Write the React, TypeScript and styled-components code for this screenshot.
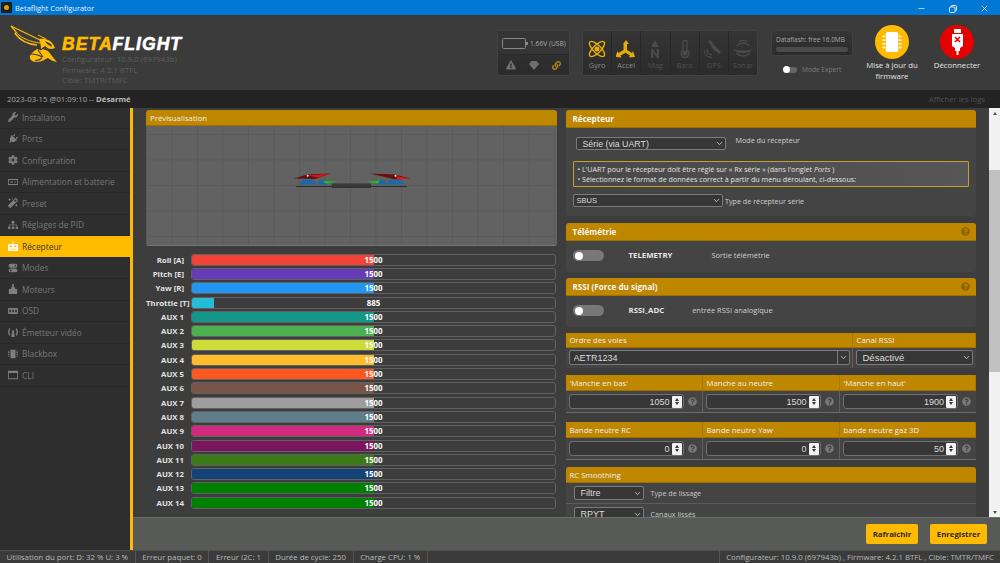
import React from 'react';
import styled, { createGlobalStyle } from 'styled-components';
import { FaWrench, FaPlug, FaCog, FaMagic, FaSitemap, FaExclamationTriangle, FaLink, FaMicrochip, FaQuestionCircle } from 'react-icons/fa';
import { ChevronDown, Minus, X } from 'lucide-react';

const Global = createGlobalStyle`
  html, body { margin: 0; padding: 0; background: #3c3d3c; }
  * { box-sizing: border-box; }
  body { font-family: "Open Sans", "Liberation Sans", sans-serif; }
`;

const Page = styled.div`
  width: 1000px; height: 563px; overflow: hidden;
  display: flex; flex-direction: column; color: #d8d8d8;
`;

/* title bar */
const TitleBar = styled.div`
  height: 15px; flex: none; background: #0078d4; color: #e8f2fb;
  display: flex; align-items: center; font-size: 7.45px; padding-left: 1px;
`;
const AppIcon = styled.span`
  width: 11px; height: 11px; background: #1c1c1c; border-radius: 1px; margin-right: 3px;
  display: flex; align-items: center; justify-content: center;
`;
const AppDot = styled.span`width: 5px; height: 5px; background: #d8a400; border-radius: 50%;`;
const WindowControls = styled.div`
  margin-left: auto; display: flex; align-items: center; color: #dceaf6; padding-right: 11px; gap: 23px; margin-top: 2px;
`;

/* header */
const Header = styled.header`
  height: 75px; flex: none; background: #3a3b3a; display: flex; align-items: flex-start;
`;
const Brand = styled.div`
  display: flex; width: 497px; padding: 10px 0 0 10px; flex: none;
`;
const BrandText = styled.div`display: flex; flex-direction: column; margin: 12px 0 0 4px;`;
const Wordmark = styled.div`
  font: italic 700 17.6px/14px "Liberation Sans", sans-serif; letter-spacing: 1px; color: #fff;
  -webkit-text-stroke: 0.6px currentColor;
`;
const WordAccent = styled.span`color: #ffbb00;`;
const Versions = styled.div`
  font-size: 7.8px; line-height: 10.7px; color: #5d5e5d; margin-top: 3px; white-space: nowrap;
`;
const DarkPanel = styled.div`
  background: linear-gradient(#343534, #2a2b2a); border-radius: 3px; border: 1px solid #404140;
`;
const PowerPanel = styled(DarkPanel)`
  width: 73px; height: 46px; margin-top: 15px; flex: none; display: flex; flex-direction: column;
`;
const PowerTop = styled.div`
  height: 24px; display: flex; align-items: center; padding: 2px 0 0 4px; gap: 4px; font-size: 6.7px; color: #a8a8a8; white-space: nowrap;
  border-bottom: 1px solid #282928; background: #343534;
`;
const BatteryShell = styled.span`
  width: 24px; height: 11px; border: 1px solid #8a8a8a; border-radius: 1.5px; position: relative; flex: none;
  &::after { content: ''; position: absolute; right: -3px; top: 3px; width: 2px; height: 3px; background: #8a8a8a; }
`;
const PowerBottom = styled.div`
  flex: 1; display: flex; align-items: center; justify-content: space-around; padding: 0 2px;
`;
const SensorPanel = styled(DarkPanel)`
  margin: 15px 0 0 12px; height: 46px; flex: none; display: flex; width: 176px;
`;
const SensorCell = styled.div<{ $on?: boolean }>`
  flex: 1; display: flex; flex-direction: column; align-items: center; padding-top: 9px;
  border-left: 1px solid #262726; &:first-child { border-left: 0; }
  color: ${p => (p.$on ? '#e8ac08' : '#4a4b4a')};
  svg { height: 18px; width: 20px; flex: none; }
`;
const SensorLabel = styled.span<{ $on?: boolean }>`
  font-size: 7.4px; color: ${p => (p.$on ? '#8a8b8a' : '#505150')}; margin-top: 2px; line-height: 10px;
`;
const FlashColumn = styled.div`
  width: 82px; margin: 15px 0 0 13px; flex: none; display: flex; flex-direction: column;
`;
const FlashBox = styled(DarkPanel)`
  height: 26px; padding: 3px 4px; font-size: 6.5px; color: #a8a8a8; white-space: nowrap; line-height: 11px;
`;
const FlashBar = styled.div`height: 5px; border-radius: 2px; background: #4a4b4a; margin-top: 2px;`;
const ExpertRow = styled.div`
  display: flex; align-items: center; gap: 5px; font-size: 6.6px; color: #7c7d7c; margin: 9px 0 0 13px; white-space: nowrap;
`;
const MiniSwitch = styled.span`
  width: 13px; height: 6px; border-radius: 3px; background: #666; position: relative; flex: none;
  &::before { content: ''; position: absolute; left: -1px; top: -.5px; width: 7px; height: 7px; border-radius: 50%; background: #fff; }
`;
const ActionGroup = styled.div`display: flex; margin-left: 6.5px; flex: none;`;
const Action = styled.div`
  width: 65px; display: flex; flex-direction: column; align-items: center; text-align: center; padding-top: 9.5px;
  font-size: 7.8px; line-height: 10.7px; color: #e4e4e4;
`;
const ActionCircle = styled.div<{ $color: string }>`
  width: 34px; height: 34px; border-radius: 50%; background: ${p => p.$color}; color: #fff;
  display: flex; align-items: center; justify-content: center; margin-bottom: 1.500px;
`;

/* log bar */
const LogBar = styled.div`
  height: 18px; flex: none; background: #222322; display: flex; align-items: center; justify-content: space-between;
  padding: 0 15px 0 7px; font-size: 7.75px; color: #a9a9a9;
`;
const LogState = styled.b`color: #bdbdbd; font-weight: 700;`;
const LogLink = styled.span`color: #515251; font-size: 7.7px;`;

/* main */
const Main = styled.div`flex: 1; display: flex; min-height: 0;`;
const Sidebar = styled.nav`width: 130px; flex: none; background: #2d2e2d; overflow: hidden;`;
const NavList = styled.div`margin-top: -1px;`;
const NavItem = styled.div<{ $active?: boolean }>`
  height: 21.5px; display: flex; align-items: center; padding-left: 8px; gap: 4px;
  font-size: 8.4px; white-space: nowrap;
  background: ${p => (p.$active ? '#ffbb00' : '#2d2e2d')};
  color: ${p => (p.$active ? '#3a3a3a' : '#787978')};
  border-bottom: 1px solid #262726;
  svg { flex: none; width: 10px; height: 10px; color: ${p => (p.$active ? '#fff' : '#7d7e7d')}; }
`;
const PortsIcon = styled(FaPlug)`transform: rotate(45deg);`;
const Tab = styled.section`
  flex: 1; min-width: 0; border-left: 3px solid #ffbb00; display: flex; flex-direction: column;
`;
const ScrollArea = styled.div`flex: 1; min-height: 0; display: flex; background: #3c3d3c; overflow: hidden;`;
const Columns = styled.div`
  flex: 1; min-width: 0; padding: 2px 13px 0 13px; display: grid; grid-template-columns: 411px 410.5px; column-gap: 8.5px; align-items: start; overflow: hidden;
`;
const Column = styled.div`display: flex; flex-direction: column;`;

const Scrollbar = styled.div`
  width: 11px; flex: none; background: #f1f1f1; display: flex; flex-direction: column; align-items: center; position: relative;
`;
const ScrollArrow = styled.div<{ $down?: boolean }>`
  height: 11px; flex: none; display: flex; align-items: center; justify-content: center;
  &::before { content: ''; border: 2.5px solid transparent; ${p => (p.$down ? 'border-top: 3px solid #505050; margin-top: 3px;' : 'border-bottom: 3px solid #505050; margin-bottom: 3px;')} }
`;
const ScrollTrack = styled.div`flex: 1; width: 100%; padding-top: 51px;`;
const ScrollThumb = styled.div`height: 202px; background: #c1c1c1; width: 100%;`;

/* panels */
const Heading = styled.div<{ $h?: number }>`
  height: ${p => p.$h ?? 18}px; background: #bf8600; color: #f4f4f4; display: flex; align-items: center; justify-content: space-between;
  padding: 0 6px 0 7px; font-size: 8.1px; font-weight: 700; border-radius: 3px 3px 0 0; border-bottom: 1px solid #9d7000; flex: none;
`;
const PlainHeading = styled(Heading)`font-weight: 400; font-size: 7.8px; padding-left: 4px; color: #f0f0f0;`;
const PreviewPanel = styled.div`
  height: 136px; background: #5f5f5f; border-radius: 3px; display: flex; flex-direction: column; overflow: hidden; border-bottom: 1px solid #777;
`;
const PreviewCanvas = styled.div`
  flex: 1; display: flex; align-items: center; justify-content: center; padding: 0 3px 12px 0;
  background-color: #626262;
  background-image:
    linear-gradient(#5b5b5b 1px, transparent 1px), linear-gradient(90deg, #5b5b5b 1px, transparent 1px);
  background-size: 25.500px 25.500px;
  background-position: 0 8px, 0 0;
`;
const Bars = styled.div`margin-top: 6.5px; display: flex; flex-direction: column;`;
const BarRow = styled.div`
  height: 14.3px; display: grid; grid-template-columns: 38px 365px; column-gap: 7px; align-items: center; justify-content: start;
`;
const BarLabel = styled.span`
  font-size: 7.8px; font-weight: 700; color: #e2e2e2; text-align: right; white-space: nowrap;
`;
const BarTrack = styled.div`
  height: 12px; border: 1px solid #606160; border-radius: 3px; position: relative; overflow: hidden;
`;
const BarFill = styled.div<{ $c: string }>`height: 100%; background: ${p => p.$c};`;
const BarValue = styled.span`
  position: absolute; left: 0; right: 0; top: 0; bottom: 0; text-align: center; line-height: 10px; font-size: 7.9px; font-weight: 700; color: #fff;
`;

const Panel = styled.div<{ $mt?: number }>`
  background: #434443; border-radius: 3px; margin-top: ${p => p.$mt ?? 0}px; display: flex; flex-direction: column;
`;
const Help = styled(FaQuestionCircle)<{ $dim?: boolean }>`
  width: 9px; height: 9px; flex: none; color: ${p => (p.$dim ? '#787978' : '#8d6500')};
`;
const SelectWrap = styled.div<{ $w: number; $h?: number; $ml?: number }>`
  position: relative; width: ${p => p.$w}px; height: ${p => p.$h ?? 14}px; margin-left: ${p => p.$ml ?? 0}px; flex: none;
`;
const NativeSelect = styled.select<{ $fs?: number; $pl?: number }>`
  appearance: none; width: 100%; height: 100%; background: #363736; border: 1px solid #7a7b7a; border-radius: 2px; color: #dcdcdc;
  font: ${p => p.$fs ?? 9}px "Liberation Sans", sans-serif; padding: 0 0 0 ${p => p.$pl ?? 6}px; outline: none; display: block;
`;
const Chevron = styled(ChevronDown)`
  position: absolute; right: 2px; top: 50%; margin-top: -4.5px; width: 9px; height: 9px; color: #e0e0e0; pointer-events: none;
`;
const ChevronDivider = styled.span`
  position: absolute; right: 12px; top: 1px; bottom: 1px; width: 1px; background: #7a7b7a; pointer-events: none;
`;
const ReceiverBody = styled.div`padding: 9px 7px 9px; display: flex; flex-direction: column;`;
const SelectRow = styled.div`display: flex; align-items: flex-start; font-size: 7.2px; color: #d0d0d0;`;
const ModeLabel = styled.span`margin: -2px 0 0 10px; line-height: 10px;`;
const TypeLabel = styled.span`margin: 2px 0 0 2.5px; line-height: 10px;`;
const Note = styled.div`
  margin: 11px 0 7px; height: 26px; border: 1px solid #c5a02b; border-radius: 1px; background: linear-gradient(90deg, #464746, #555655);
  font-size: 7.17px; line-height: 9.5px; padding: 3px 4px; color: #e2e2e2; white-space: nowrap;
`;
const ToggleBody = styled.div<{ $gap: number }>`
  height: 31px; display: flex; align-items: center; padding: 0 0 2px 7px; font-size: 7.5px; color: #cfcfcf;
  span:last-child { margin-left: ${p => p.$gap}px; margin-top: -2px; }
`;
const Switch = styled.span`
  width: 31px; height: 11px; border-radius: 6px; background: #777877; position: relative; flex: none; margin-right: 25px;
  &::before { content: ''; position: absolute; left: 2px; top: 1.5px; width: 8px; height: 8px; border-radius: 50%; background: #fff; }
`;
const FeatureName = styled.span`font-weight: 700; font-size: 7.8px; color: #e6e6e6; white-space: nowrap; margin-top: -1px;`;
const FeatureDesc = styled.span`white-space: nowrap;`;
const SplitHeads = styled.div`display: grid; grid-template-columns: 287px 123.5px;`;
const SplitCell = styled.div`
  border-right: 1px solid #5f605f; padding: 3px; &:last-child { border-right: 0; }
`;
const ChannelCell = styled(SplitCell)`height: 20px; padding: 2px 3px 0;`;
const HeadPad = styled(PlainHeading)`border-radius: 0; border-right: 1px solid #aa7800; &:last-child { border-right: 0; }`;
const TripleGrid = styled.div`display: grid; grid-template-columns: 137px 137px 136.5px;`;
const NumCell = styled.div`
  height: 21px; display: flex; align-items: center; padding: 0 5px 0 3px; border-right: 1px solid #5f605f; gap: 4px;
  &:last-child { border-right: 0; }
`;
const NumInput = styled.div`
  flex: 1; height: 15px; border: 1px solid #6f706f; border-radius: 3px; background: #363736; display: flex; align-items: center; justify-content: flex-end;
  font: 9px "Liberation Sans", sans-serif; color: #dcdcdc; padding-right: 1px; gap: 2px;
`;
const Spin = styled.span`
  width: 10px; height: 12px; background: #f2f2f2; border-radius: 1px; display: flex; flex-direction: column; align-items: center; justify-content: center; gap: 1.5px;
  &::before { content: ''; border: 2.2px solid transparent; border-top: 0; border-bottom: 3px solid #333; }
  &::after { content: ''; border: 2.2px solid transparent; border-bottom: 0; border-top: 3px solid #333; }
`;
const NumPanel = styled(Panel)`border-bottom: 1px solid #6a6b6a; border-radius: 3px 3px 0 0;`;
const SmoothRow = styled.div`
  height: 21px; display: flex; align-items: center; padding-left: 8px; gap: 7px; font-size: 7.2px; color: #c8c8c8; border-bottom: 1px solid #5a5b5a;
`;

/* bottom */
const Toolbar = styled.div`
  height: 33px; flex: none; background: #585a58; border-top: 1px solid #6c6d6c; display: flex; align-items: flex-start; justify-content: flex-end; gap: 12px; padding: 6px 13px 0 0; margin-right: 0;
`;
const ToolButton = styled.button<{ $w: number }>`
  width: ${p => p.$w}px; height: 20px; background: #ffbb00; border: 0; border-radius: 2px; padding: 0;
  font: 700 7.8px "Open Sans", sans-serif; color: #2a2a2a;
`;
const StatusBar = styled.footer`
  height: 13px; flex: none; background: #3a3b3a; border-top: 1px solid #505150; display: flex; font-size: 7.8px; color: #b9b9b9; white-space: nowrap;
`;
const StatusItem = styled.span`
  padding: 0 6.6px; line-height: 12px; border-right: 1px solid #555655;
  &:first-child { padding-left: 6.5px; }
`;
const StatusRight = styled.span`
  margin-left: auto; padding: 0 6px; line-height: 12px; border-left: 1px solid #555655;
`;

/* drawings */
const WaspLogo = () => (
  <svg width="48" height="38" viewBox="0 0 48 38" fill="none">
    <path d="M1 1L32 16" stroke="#ffbb00" strokeWidth="1.3" />
    <path d="M1 1L6.500 7.500 5 8.500C9 14 16 19 27 20" stroke="#ffbb00" strokeWidth="1.300" />
    <path d="M7 8.500C12 13 20 17 30 18" stroke="#ffbb00" strokeWidth="1" />
    <path d="M28 10L36 14" stroke="#ffbb00" strokeWidth="1" />
    <path d="M29 14C36 13 42 15 45 23 41 25 38 24 35 21L31 24C31 20 30 17 29 14z" fill="#ffbb00" />
    <path d="M35 16L41 19 42 22 37 19z" fill="#3a3b3a" />
    <path d="M27 24C24 26 21 28 20 31 19 35 23 37 27 37 32 37 35 34 38 33 40 35 43 36 47 37 43 33 41 29 38 26L33 24C31 26 29 25 27 24z" fill="#ffbb00" />
    <path d="M21 29C25 29 29 30 32 32M25 36C28 35 30 35 32 33M28 25L33 32" stroke="#3a3b3a" strokeWidth="1.100" />
  </svg>
);
const Gyro = () => (
  <svg viewBox="0 0 20 18" fill="none" stroke="currentColor" strokeWidth="1.4">
    <ellipse cx="10" cy="9" rx="10" ry="3.8" transform="rotate(45 10 9)" />
    <ellipse cx="10" cy="9" rx="10" ry="3.8" transform="rotate(-45 10 9)" />
    <circle cx="10" cy="9" r="1.8" fill="currentColor" />
  </svg>
);
const Accel = () => (
  <svg viewBox="0 0 20 18" fill="currentColor">
    <path d="M10 0l3 4h-2v6l5 3 1-2 2 6-6 .5 1-2-4.500-2.700-5 2.700 1 2-6-.5 2-6 1 2 5-3V4H7z" />
  </svg>
);
const Mag = () => (
  <svg viewBox="0 0 20 18" fill="currentColor">
    <path d="M10 0l4 7H6z" />
    <path d="M6 18V9h1.800l4 5.500V9H14v9h-1.800l-4-5.500V18z" />
  </svg>
);
const Baro = () => (
  <svg viewBox="0 0 20 18" fill="none" stroke="currentColor" strokeWidth="1.4">
    <path d="M8 10V2a2 2 0 0 1 4 0v8a4 4 0 1 1-4 0z" />
    <circle cx="10" cy="13" r="1.800" fill="currentColor" />
  </svg>
);
const Satellite = () => (
  <svg viewBox="0 0 20 18" fill="currentColor" stroke="none">
    <path d="M6 0l4 4-2 2-4-4zM13 8l4 4-2 2-4-4z" />
    <path d="M9.500 4.500l4 4-2.500 2.500-4-4z" />
    <path d="M3.500 9.500C3.500 12 5.500 14 8 14v1.300C4.800 15.300 2.200 12.700 2.200 9.500zM.5 9.500C.5 13.700 3.800 17 8 17v1C3.200 18-.5 14.300-.5 9.500z" />
  </svg>
);
const Sonar = () => (
  <svg viewBox="0 0 20 18" fill="none" stroke="currentColor" strokeWidth="1.300">
    <path d="M8.500 2.500a2.500 2.500 0 0 1 3 0M6 1a6 6 0 0 1 8 0" transform="translate(0 1)" />
    <path d="M3.500 7a9 9 0 0 1 13 0" transform="translate(0 -1)" />
    <path d="M0 9c3 3 5 4 10 4s7-1 10-4c-3 1-6 1.500-10 1.500S3 10 0 9z" fill="currentColor" stroke="none" />
    <path d="M3 13c4 4 10 4 14 0" />
  </svg>
);
const Diamond = () => (
  <svg width="10" height="10" viewBox="0 0 10 10" fill="#6f706f">
    <path d="M2.500 1h5L10 4 5 10 0 4z" />
  </svg>
);
const UsbIcon = () => (
  <svg width="15" height="26" viewBox="0 0 15 26" fill="#fff">
    <path d="M4 0h7v4H4z" />
    <path d="M2 5h11v12l-3 2v3H8.500v4h-2v-4H5v-3l-3-2z" />
    <path d="M5 8l5 5M10 8l-5 5" stroke="#e60000" strokeWidth="1.600" />
  </svg>
);
const Restore = () => (
  <svg width="8" height="8" viewBox="0 0 8 8" fill="none" stroke="currentColor" strokeWidth="1">
    <rect x=".5" y="2" width="5.500" height="5.500" rx="1" />
    <path d="M2 2V1.500a1 1 0 0 1 1-1h3.500a1 1 0 0 1 1 1V5a1 1 0 0 1-1 1" />
  </svg>
);
const QuadModel = () => (
  <svg width="160" height="40" viewBox="0 0 160 40">
    <path d="M26 26.500H62M101 26.500H137" stroke="#2c2c2c" strokeWidth="1" />
    <path d="M62 23.500h39V28H62z" fill="#333" />
    <path d="M63 25h37" stroke="#555" strokeWidth=".6" />
    <path d="M24 18.500L37 14.500 60 13.500 45 19z" fill="#6a0f0f" />
    <path d="M38 15.500L60 13.500 48 17.500z" fill="#d01818" />
    <path d="M29 24.500L33 19.500H43L47 24.500z" fill="#1a6aa8" />
    <path d="M47 24.500L50 20H54L57 24.500z" fill="#1a6aa8" />
    <path d="M53 21L68 21.800 56 23.500z" fill="#20c020" />
    <circle cx="37.700" cy="15.700" r="1" fill="#e6e6e6" />
    <path d="M100 13.500L125 14.500 140 18.500 125 19.500z" fill="#6a0f0f" />
    <path d="M125 16L140 18.500 128 19.500z" fill="#e01818" />
    <path d="M116 24.500L120 19.500H130L135 24.500z" fill="#1a6aa8" />
    <path d="M106 24.500L109 20H114L117 24.500z" fill="#1a6aa8" />
    <path d="M96 21.800L110 20.500 108 23.500z" fill="#20c020" />
    <circle cx="125.500" cy="15.700" r="1" fill="#e6e6e6" />
  </svg>
);
const icon = (children: React.ReactNode) => (
  <svg viewBox="0 0 12 12" fill="currentColor" stroke="none">{children}</svg>
);
const BatteryNav = () => icon(<path fillRule="evenodd" d="M0 2.500h12v7H0zM1 3.500v5h10v-5zM3 5.500h3v1H3zM8 5h1v2H8z" />);
const ReceiverNav = () => icon(<path fillRule="evenodd" d="M5.500 0h1v3.500H11a1 1 0 0 1 1 1V11a1 1 0 0 1-1 1H1a1 1 0 0 1-1-1V4.500a1 1 0 0 1 1-1h4.500zM2 5.500v2h2.500v-2zM7.500 5.500v2H10v-2zM3 9.300v1h6v-1z" />);
const ModesNav = () => icon(<path fillRule="evenodd" d="M3 1h6a2.300 2.300 0 0 1 0 4.600H3A2.300 2.300 0 0 1 3 1zM8.800 2.300a1 1 0 1 0 0 2 1 1 0 0 0 0-2zM3 6.600h6a2.300 2.300 0 0 1 0 4.600H3a2.300 2.300 0 0 1 0-4.600zM3.200 7.900a1 1 0 1 0 0 2 1 1 0 0 0 0-2z" />);
const MotorNav = () => icon(<path d="M5 0h2v4h1.500v2H11v6H1V6h2.500V4H5z" />);
const OsdNav = () => icon(<path fillRule="evenodd" d="M1 2.500h10a1 1 0 0 1 1 1v5a1 1 0 0 1-1 1H1a1 1 0 0 1-1-1v-5a1 1 0 0 1 1-1zM1.500 4.500v3h2v-3zM5 4.500v3h2v-3zM8.500 4.500v3h2v-3z" />);
const VtxNav = () => icon(<path d="M5 4h2l1 8H4zM3 2.500L1.800 1.500C-.5 4-.5 8 1.800 10.500L3 9.500C1.300 7.500 1.300 4.500 3 2.500zM9 2.500l1.200-1c2.300 2.500 2.300 6.500 0 9L9 9.500c1.700-2 1.700-5 0-7z" />);
const BlackboxNav = () => icon(<path d="M3 1h6v10H3zM0 2h2v1H0zM0 4h2v1H0zM0 6h2v1H0zM0 8h2v1H0zM10 2h2v1h-2zM10 4h2v1h-2zM10 6h2v1h-2zM10 8h2v1h-2z" />);
const CliNav = () => icon(<path fillRule="evenodd" d="M0 1h12v10H0zM1 3.500V10h10V3.500z" />);

const navItems: [string, React.ReactNode][] = [
  ['Installation', <FaWrench />],
  ['Ports', <PortsIcon />],
  ['Configuration', <FaCog />],
  ['Alimentation et batterie', <BatteryNav />],
  ['Preset', <FaMagic />],
  ['Réglages de PID', <FaSitemap />],
  ['Récepteur', <ReceiverNav />],
  ['Modes', <ModesNav />],
  ['Moteurs', <MotorNav />],
  ['OSD', <OsdNav />],
  ['Émetteur vidéo', <VtxNav />],
  ['Blackbox', <BlackboxNav />],
  ['CLI', <CliNav />],
];

const channels: [string, number, string][] = [
  ['Roll [A]', 1500, '#f44336'],
  ['Pitch [E]', 1500, '#673ab7'],
  ['Yaw [R]', 1500, '#2196f3'],
  ['Throttle [T]', 885, '#26bcd7'],
  ['AUX 1', 1500, '#149688'],
  ['AUX 2', 1500, '#4caf50'],
  ['AUX 3', 1500, '#cddc39'],
  ['AUX 4', 1500, '#ffbc2c'],
  ['AUX 5', 1500, '#ff5722'],
  ['AUX 6', 1500, '#795548'],
  ['AUX 7', 1500, '#9e9e9e'],
  ['AUX 8', 1500, '#607d8b'],
  ['AUX 9', 1500, '#d12b80'],
  ['AUX 10', 1500, '#7b1560'],
  ['AUX 11', 1500, '#3b7a17'],
  ['AUX 12', 1500, '#134279'],
  ['AUX 13', 1500, '#008000'],
  ['AUX 14', 1500, '#008000'],
];

const Select = ({ w, h, ml, value, fs, pl, boxed }: { w: number; h?: number; ml?: number; value: string; fs?: number; pl?: number; boxed?: boolean }) => (
  <SelectWrap $w={w} $h={h} $ml={ml}>
    <NativeSelect $fs={fs} $pl={pl} defaultValue={value}>
      <option>{value}</option>
    </NativeSelect>
    {boxed && <ChevronDivider />}
    <Chevron strokeWidth={2} />
  </SelectWrap>
);

const NumField = ({ value }: { value: number }) => (
  <NumCell>
    <NumInput>{value}<Spin /></NumInput>
    <Help $dim />
  </NumCell>
);

export default function App() {
  return (
    <Page>
      <Global />
      <TitleBar>
        <AppIcon><AppDot /></AppIcon>
        Betaflight Configurator
        <WindowControls>
          <Minus size={9} />
          <Restore />
          <X size={9} />
        </WindowControls>
      </TitleBar>
      <Header>
        <Brand>
          <WaspLogo />
          <BrandText>
            <Wordmark><WordAccent>BETA</WordAccent>FLIGHT</Wordmark>
            <Versions>
              Configurateur: 10.9.0 (697943b)<br />
              Firmware: 4.2.1 BTFL<br />
              Cible: TMTR/TMFC
            </Versions>
          </BrandText>
        </Brand>
        <PowerPanel>
          <PowerTop><BatteryShell />1.66V (USB)</PowerTop>
          <PowerBottom>
            <FaExclamationTriangle size={10} color="#6f706f" />
            <Diamond />
            <FaLink size={9} color="#b38a10" />
          </PowerBottom>
        </PowerPanel>
        <SensorPanel>
          <SensorCell $on><Gyro /><SensorLabel $on>Gyro</SensorLabel></SensorCell>
          <SensorCell $on><Accel /><SensorLabel $on>Accel</SensorLabel></SensorCell>
          <SensorCell><Mag /><SensorLabel>Mag</SensorLabel></SensorCell>
          <SensorCell><Baro /><SensorLabel>Baro</SensorLabel></SensorCell>
          <SensorCell><Satellite /><SensorLabel>GPS</SensorLabel></SensorCell>
          <SensorCell><Sonar /><SensorLabel>Sonar</SensorLabel></SensorCell>
        </SensorPanel>
        <FlashColumn>
          <FlashBox>Dataflash: free 16.0MB<FlashBar /></FlashBox>
          <ExpertRow><MiniSwitch />Mode Expert</ExpertRow>
        </FlashColumn>
        <ActionGroup>
          <Action>
            <ActionCircle $color="#ffbb00"><FaMicrochip size={20} /></ActionCircle>
            Mise à jour du firmware
          </Action>
          <Action>
            <ActionCircle $color="#e60000"><UsbIcon /></ActionCircle>
            Déconnecter
          </Action>
        </ActionGroup>
      </Header>
      <LogBar>
        <span>2023-03-15 @01:09:10 -- <LogState>Désarmé</LogState></span>
        <LogLink>Afficher les logs</LogLink>
      </LogBar>
      <Main>
        <Sidebar>
          <NavList>
            {navItems.map(([label, ic]) => (
              <NavItem key={label} $active={label === 'Récepteur'}>{ic}{label}</NavItem>
            ))}
          </NavList>
        </Sidebar>
        <Tab>
          <ScrollArea>
            <Columns>
              <Column>
                <PreviewPanel>
                  <PlainHeading $h={16}>Prévisualisation</PlainHeading>
                  <PreviewCanvas><QuadModel /></PreviewCanvas>
                </PreviewPanel>
                <Bars>
                  {channels.map(([name, v, c]) => (
                    <BarRow key={name}>
                      <BarLabel>{name}</BarLabel>
                      <BarTrack>
                        <BarFill $c={c} style={{ width: `${((v - 800) / 1400) * 100}%` }} />
                        <BarValue>{v}</BarValue>
                      </BarTrack>
                    </BarRow>
                  ))}
                </Bars>
              </Column>
              <Column>
                <Panel>
                  <Heading>Récepteur</Heading>
                  <ReceiverBody>
                    <SelectRow>
                      <Select w={150} h={13} ml={3} value="Série (via UART)" fs={8.800} />
                      <ModeLabel>Mode du récepteur</ModeLabel>
                    </SelectRow>
                    <Note>
                      • L'UART pour le récepteur doit être réglé sur « Rx série » (dans l'onglet <i>Ports</i> )<br />
                      • Sélectionnez le format de données correct à partir du menu déroulant, ci-dessous:
                    </Note>
                    <SelectRow>
                      <Select w={150} h={13} value="SBUS" fs={7.5} pl={3} />
                      <TypeLabel>Type de récepteur série</TypeLabel>
                    </SelectRow>
                  </ReceiverBody>
                </Panel>
                <Panel $mt={7}>
                  <Heading>Télémétrie<Help /></Heading>
                  <ToggleBody $gap={39}>
                    <Switch />
                    <FeatureName>TELEMETRY</FeatureName>
                    <FeatureDesc>Sortie télémétrie</FeatureDesc>
                  </ToggleBody>
                </Panel>
                <Panel $mt={6}>
                  <Heading>RSSI (Force du signal)<Help /></Heading>
                  <ToggleBody $gap={28}>
                    <Switch />
                    <FeatureName>RSSI_ADC</FeatureName>
                    <FeatureDesc>entrée RSSI analogique</FeatureDesc>
                  </ToggleBody>
                </Panel>
                <Panel $mt={6}>
                  <SplitHeads>
                    <HeadPad $h={15}>Ordre des voies</HeadPad>
                    <HeadPad $h={15}>Canal RSSI</HeadPad>
                    <ChannelCell><Select w={281} h={15} value="AETR1234" fs={9} pl={4} boxed /></ChannelCell>
                    <ChannelCell><Select w={117} h={15} value="Désactivé" fs={9.500} /></ChannelCell>
                  </SplitHeads>
                </Panel>
                <NumPanel $mt={7}>
                  <TripleGrid>
                    <HeadPad $h={16}>'Manche en bas'</HeadPad>
                    <HeadPad $h={16}>Manche au neutre</HeadPad>
                    <HeadPad $h={16}>'Manche en haut'</HeadPad>
                    <NumField value={1050} />
                    <NumField value={1500} />
                    <NumField value={1900} />
                  </TripleGrid>
                </NumPanel>
                <NumPanel $mt={9}>
                  <TripleGrid>
                    <HeadPad $h={16}>Bande neutre RC</HeadPad>
                    <HeadPad $h={16}>Bande neutre Yaw</HeadPad>
                    <HeadPad $h={16}>bande neutre gaz 3D</HeadPad>
                    <NumField value={0} />
                    <NumField value={0} />
                    <NumField value={50} />
                  </TripleGrid>
                </NumPanel>
                <Panel $mt={7}>
                  <PlainHeading $h={16}>RC Smoothing</PlainHeading>
                  <SmoothRow><Select w={70} h={14} value="Filtre" fs={9} />Type de lissage</SmoothRow>
                  <SmoothRow><Select w={70} h={14} value="RPYT" fs={9} />Canaux lissés</SmoothRow>
                </Panel>
              </Column>
            </Columns>
            <Scrollbar>
              <ScrollArrow />
              <ScrollTrack><ScrollThumb /></ScrollTrack>
              <ScrollArrow $down />
            </Scrollbar>
          </ScrollArea>
          <Toolbar>
            <ToolButton $w={52}>Rafraîchir</ToolButton>
            <ToolButton $w={57}>Enregistrer</ToolButton>
          </Toolbar>
        </Tab>
      </Main>
      <StatusBar>
        <StatusItem>Utilisation du port: D: 32 % U: 3 %</StatusItem>
        <StatusItem>Erreur paquet: 0</StatusItem>
        <StatusItem>Erreur I2C: 1</StatusItem>
        <StatusItem>Durée de cycle: 250</StatusItem>
        <StatusItem>Charge CPU: 1 %</StatusItem>
        <StatusRight>Configurateur: 10.9.0 (697943b) , Firmware: 4.2.1 BTFL , Cible: TMTR/TMFC</StatusRight>
      </StatusBar>
    </Page>
  );
}
